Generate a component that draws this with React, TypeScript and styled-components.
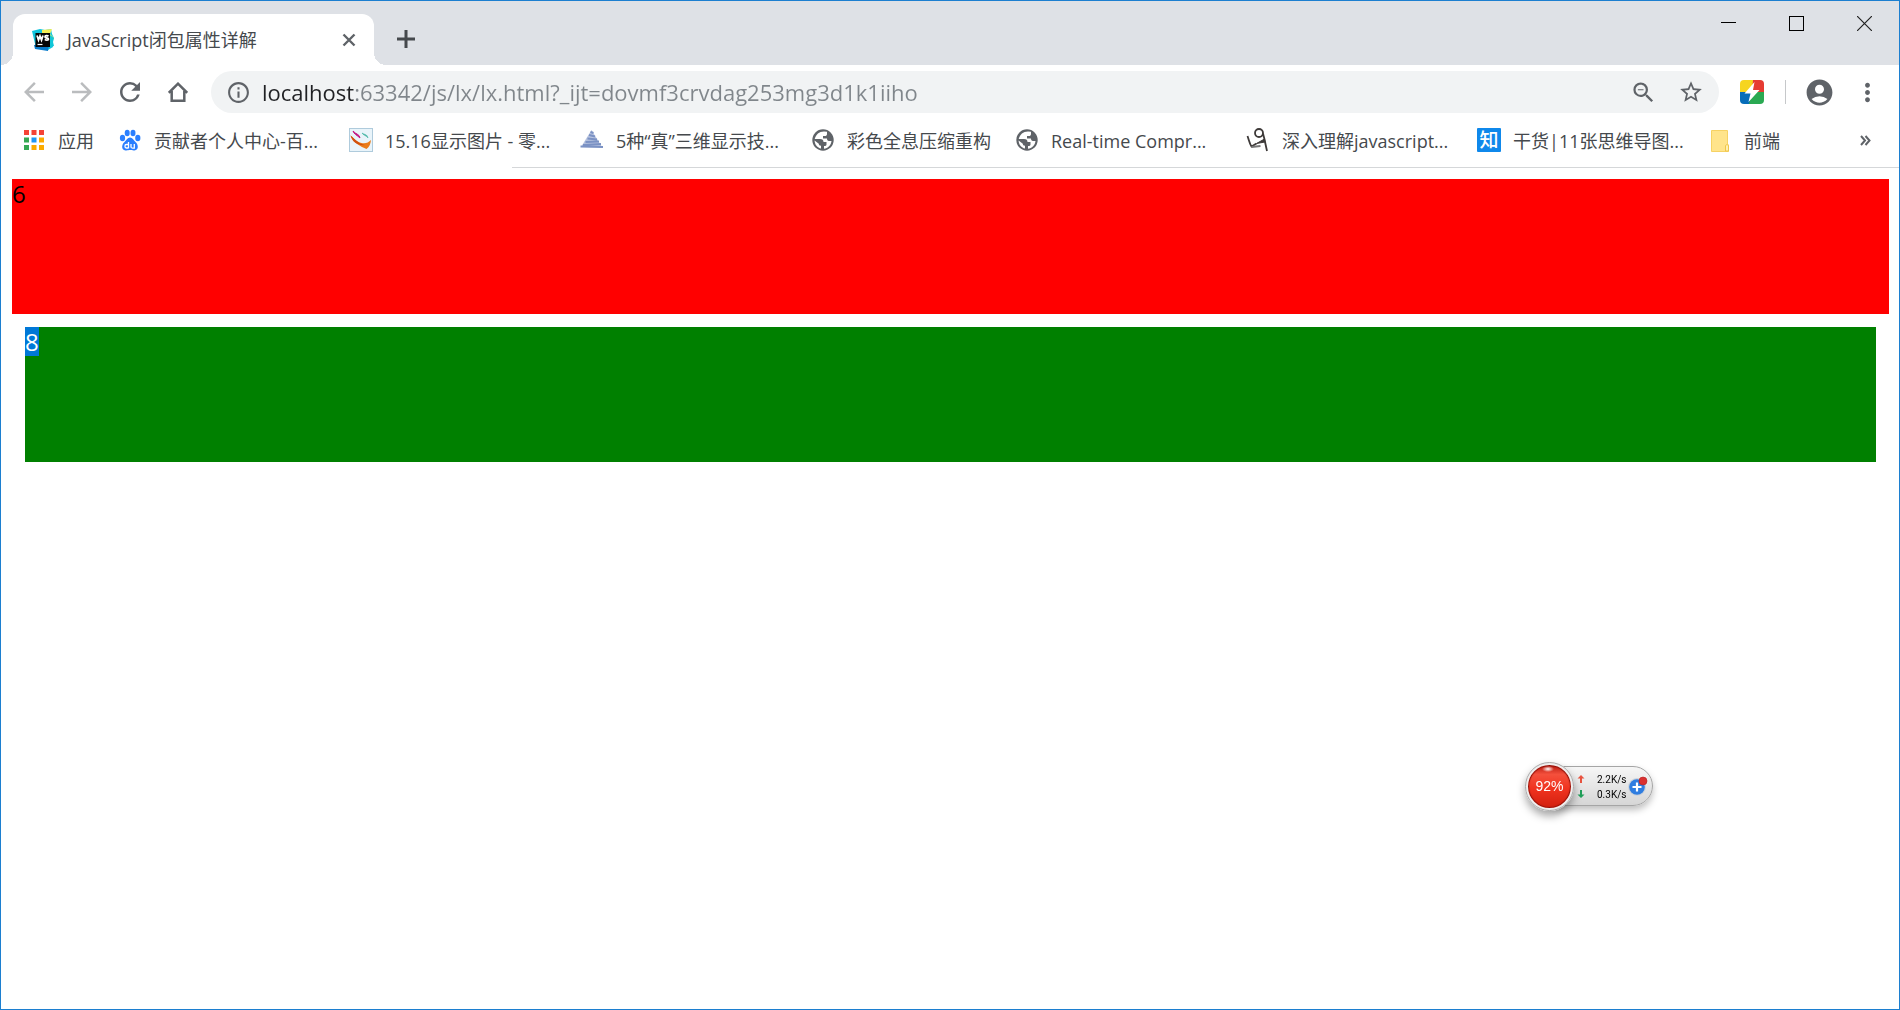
import React from 'react';
import styled, { createGlobalStyle } from 'styled-components';
import {
  MdArrowBack,
  MdArrowForward,
  MdRefresh,
  MdInfoOutline,
  MdZoomOut,
  MdStarBorder,
  MdAccountCircle,
  MdMoreVert,
} from 'react-icons/md';

const uiFont = '"Open Sans", "Noto Sans CJK SC", sans-serif';

const GlobalStyle = createGlobalStyle`
  *, *::before, *::after { box-sizing: border-box; }
  body { margin: 0; background: #fff; font-family: ${uiFont}; }
  button, input { font: inherit; margin: 0; padding: 0; border: 0; background: none; }
  svg { display: block; flex: none; }
`;

const Window = styled.div`
  display: flex;
  flex-direction: column;
  min-height: 100vh;
  border: 1px solid #1c7fd0;
  background: #fff;
`;

const TitleBar = styled.header`
  display: flex;
  align-items: flex-end;
  height: 64px;
  padding-left: 12px;
  background: #dee1e6;
`;

const Tab = styled.div`
  position: relative;
  display: flex;
  align-items: center;
  width: 361px;
  height: 51px;
  padding: 0 13px 0 18px;
  border-radius: 12px 12px 0 0;
  background: #fff;

  &::before,
  &::after {
    content: '';
    position: absolute;
    bottom: 0;
    width: 12px;
    height: 12px;
  }
  &::before {
    right: 100%;
    background: radial-gradient(circle at 0 0, transparent 12px, #fff 12px);
  }
  &::after {
    left: 100%;
    background: radial-gradient(circle at 100% 0, transparent 12px, #fff 12px);
  }
`;

const TabTitle = styled.span`
  flex: 1;
  margin-left: 12px;
  color: #45494d;
  font-size: 18px;
  line-height: 24px;
  white-space: nowrap;
`;

const IconButton = styled.button<{ $w: number; $h: number; $dim?: boolean }>`
  display: flex;
  flex: none;
  align-items: center;
  justify-content: center;
  width: ${(p) => p.$w}px;
  height: ${(p) => p.$h}px;
  color: ${(p) => (p.$dim ? '#babcbe' : '#5f6368')};
`;

const NewTab = styled(IconButton)`
  align-self: flex-end;
  margin: 0 0 5px 12px;
`;

const WindowControls = styled.div`
  display: flex;
  align-self: flex-start;
  margin-left: auto;
`;

const Toolbar = styled.nav`
  display: flex;
  align-items: center;
  height: 48px;
  padding: 6px 8px 0 9px;
`;

const AddressBar = styled.form`
  display: flex;
  flex: 1;
  align-items: center;
  height: 42px;
  margin: 0 9px;
  padding: 0 4px 0 3px;
  border-radius: 21px;
  background: #f1f3f4;
`;

const AddressInput = styled.input`
  flex: 1;
  min-width: 0;
  height: 32px;
  outline: none;
  color: transparent;
  background: linear-gradient(to right, #202124 93px, #80868b 93px);
  background-clip: text;
  -webkit-background-clip: text;
  font-size: 22px;
`;

const Separator = styled.span`
  width: 1px;
  height: 24px;
  margin: 0 9px;
  background: #c6c8ca;
`;

const Bookmarks = styled.nav`
  display: flex;
  align-items: center;
  gap: 24px;
  height: 54px;
  padding: 0 10px 0 21px;
`;

const BookmarkLink = styled.a<{ $full?: boolean }>`
  display: flex;
  flex: none;
  align-items: center;
  gap: 12px;
  width: ${(p) => (p.$full ? '207px' : 'auto')};
  color: #45494d;
  font-size: 18px;
  line-height: 24px;
  text-decoration: none;
  white-space: nowrap;
`;

const BookmarkLabel = styled.span`
  padding-top: 2px;
`;

const More = styled(IconButton)`
  margin-left: auto;
`;

const ToolbarEdge = styled.div`
  height: 1px;
  margin-left: 511px;
  background: #d5d7d9;
`;

const Page = styled.main`
  flex: 1;
  padding: 11px 10px 11px 11px;
  font-size: 24px;
  line-height: 29px;
`;

const Block = styled.div<{ $color: string; $inset?: boolean }>`
  height: 135px;
  margin: ${(p) => (p.$inset ? '13px' : '0')};
  background: ${(p) => p.$color};
  color: #000;
`;

const Selected = styled.mark`
  display: inline-block;
  background: #0078d7;
  color: #fff;
`;

const SpeedWidget = styled.aside`
  position: fixed;
  right: 247px;
  bottom: 199px;
  display: flex;
  align-items: center;
  height: 50px;
`;

const Ball = styled.div`
  z-index: 1;
  display: flex;
  align-items: center;
  justify-content: center;
  width: 49px;
  height: 49px;
  margin-right: -20px;
  border: 3px solid #eee;
  border-radius: 50%;
  outline: 1px solid #a9a9a9;
  outline-offset: -1px;
  background:
    radial-gradient(ellipse 6px 3px at 20px 4px, #fff, transparent),
    linear-gradient(#b81a10, #f4503c 22%, #f0331f 55%, #d2200f);
  box-shadow: inset 0 0 1px 1px #8e1109, 0 5px 8px rgba(0, 0, 0, 0.35);
  color: #fff;
  font: 14px "Liberation Sans", sans-serif;
`;

const Pill = styled.div`
  display: flex;
  align-items: center;
  width: 99px;
  height: 40px;
  padding-left: 22px;
  border: 1px solid #a5a5a5;
  border-radius: 0 20px 20px 0;
  background: linear-gradient(#f6f6f6, #d6d6d6);
  box-shadow: 0 4px 7px rgba(0, 0, 0, 0.25);
`;

const Rates = styled.div`
  display: grid;
  grid-template-columns: 8px 28px;
  align-items: center;
  column-gap: 12px;
  padding-top: 1px;
  color: #000;
  font: 10px/15px Roboto, sans-serif;
  white-space: nowrap;
`;

const Plus = styled.button`
  margin-left: 3px;
`;

const WebStormIcon = () => (
  <svg width="24" height="24" viewBox="0 0 24 24">
    <path d="M1 3l8-2 5 1 6-1 1 5 2 4-2 3 1 6-5 3-12-2z" fill="#10c5dd" />
    <path d="M11 2l10-1-2 5 4 4-2 4-10-6z" fill="#f4ef57" />
    <path d="M19 7l4 3-1 4 1 4-5 1z" fill="#12c6d8" />
    <path d="M3 17l15-1-1 7-13-2z" fill="#087bcc" />
    <rect x="4.500" y="5" width="14.500" height="14" fill="#050505" />
    <path d="M6 7.500l1.500 4.500 1.500-4L10.500 12 12 7.500M17.500 8.300c-1-.8-3.500-.9-3.500.6 0 1.600 3.600.6 3.500 2.200-.1 1.300-2.600 1.200-3.700.2" fill="none" stroke="#fff" strokeWidth="1.800" />
    <path d="M6.500 16.500h5" stroke="#fff" strokeWidth="1.200" />
  </svg>
);

const AppsIcon = () => {
  const colors = ['#f44336', '#f44336', '#f44336', '#34a853', '#2196f3', '#fbab00', '#34a853', '#fbab00', '#fbab00'];
  return (
    <svg width="24" height="24" viewBox="0 0 24 24">
      {colors.map((fill, i) => (
        <rect key={i} x={2 + (i % 3) * 7.5} y={2 + Math.floor(i / 3) * 7.5} width="5" height="5" fill={fill} />
      ))}
    </svg>
  );
};

const PawIcon = () => (
  <svg width="24" height="24" viewBox="0 0 24 24" fill="#2a7fff">
    <ellipse cx="4.500" cy="10" rx="2.600" ry="3.300" />
    <ellipse cx="9.200" cy="5" rx="2.500" ry="3.300" />
    <ellipse cx="15" cy="5" rx="2.500" ry="3.300" />
    <ellipse cx="19.800" cy="10" rx="2.600" ry="3.300" />
    <path d="M12 9.500c2.500 0 3.500 2.500 5.500 4.500 3 2.500 3.500 8-1 8.500-2 .2-3-.4-4.500-.4s-2.500.6-4.500.4c-4.500-.5-4-6-1-8.500 2-2 3-4.500 5.500-4.500z" />
    <path d="M10.500 14v6.300M10.500 16.500H8.300c-1.800 0-1.800 3.500 0 3.500h2.200M13 16v2.800c0 1.300.6 1.400 3.300 1.400V16" fill="none" stroke="#fff" strokeWidth="1.300" />
  </svg>
);

const SwooshIcon = () => (
  <svg width="24" height="24" viewBox="0 0 24 24">
    <rect x=".5" y=".5" width="23" height="23" fill="#e9f4fa" stroke="#afcbdc" />
    <path d="M1.500 7.500c4 3.500 6 6 11 7.500 4 1 7-.5 9.500-3-.5 4-1.500 7-4.500 9C12 19 3.500 14 1.500 7.500z" fill="#ea7d1b" />
    <path d="M1.500 7.500C6 11 9 15.500 16 17c-6 1-12.500-2-14.500-9.500z" fill="#d2510f" />
    <path d="M4 3c1 3 3 3.500 7 7-.5-4-4-3.500-7-7z" fill="#c31682" stroke="#c31682" />
    <path d="M13 5c2 3 4 2 6 5-1-4-3-3-6-5z" fill="#45b5a5" stroke="#45b5a5" strokeWidth=".6" />
  </svg>
);

const PyramidIcon = () => (
  <svg width="24" height="24" viewBox="0 0 24 24" stroke="#7b92c4" strokeWidth="2" fill="none">
    <path d="M10.500 4l3 1M9 7l6 1.500M7.500 10.500l9.500 1M5.500 14l13.500-.5M3 17l18-1M.5 18.500l22.500.5" />
    <path d="M11.500 2l10.500 17H1z" fill="#7b92c4" fillOpacity=".55" stroke="none" />
  </svg>
);

const StickFigureIcon = () => (
  <svg width="24" height="24" viewBox="0 0 24 24" fill="none" stroke="#3e3a39" strokeWidth="1.800">
    <circle cx="13" cy="5" r="4" />
    <path d="M17 5.500c1.500 5 2.500 11 4 17.500" />
    <path d="M18.500 11l-8 4.500 8.500-1.500z" fill="#3e3a39" strokeWidth="1" />
    <path d="M1.500 8c1.500 4 2 7.500 4 10.500l5-3" />
    <path d="M5.500 19l9-1" stroke="#777" />
  </svg>
);

const ZhiIcon = styled.span`
  display: flex;
  align-items: center;
  justify-content: center;
  width: 24px;
  height: 24px;
  border-radius: 1px;
  background: #0f88eb;
  color: #fff;
  font-size: 19px;
  font-weight: 500;
`;

const FolderIcon = () => (
  <svg width="24" height="24" viewBox="0 0 24 24">
    <path d="M3.500 2.500h16V16l1 1v6.500h-17z" fill="#ffe48b" stroke="#f6d264" />
    <path d="M17.500 23v-5.500l1.500-1 1.500 1V23z" fill="#fff0b3" stroke="#f0c648" />
  </svg>
);

const GlobeIcon = () => (
  <svg width="24" height="24" viewBox="0 0 24 24">
    <circle cx="12" cy="12" r="10.700" fill="#5f6368" />
    <path
      d="M13 3.500c-5 0-8 3-9.300 7.500H9c2.500 0 3.500 1 3.500 3h3v2.500c0 1-1 1.500-2.500 1.500v2.700c4-.3 7-3.500 7.500-7.700h-2.500c-1.500 0-2-1-2-2.500h-4V8h2c1 0 2-.6 2-2V3.800z"
      fill="#fff"
    />
    <path d="M3.600 12.500c0 4 3 7.500 6.400 8v-2.700c-1.500 0-2.200-.8-2.200-2z" fill="#fff" />
  </svg>
);

const ExtensionIcon = () => (
  <svg width="24" height="24" viewBox="0 0 24 24">
    <path d="M4 0h10v12H0V4a4 4 0 0 1 4-4z" fill="#f6d51f" />
    <path d="M13 0h7a4 4 0 0 1 4 4v8H12z" fill="#e63b32" />
    <path d="M0 12h13l-3 12H4a4 4 0 0 1-4-4z" fill="#066db9" />
    <path d="M12 12h12v8a4 4 0 0 1-4 4H9z" fill="#2aa952" />
    <path d="M14.500 2L4.500 13.500h6L8.500 22l11-12h-6.500z" fill="#fff" />
  </svg>
);

const bookmarks: { label: string; Icon: React.ElementType; full?: boolean; glyph?: string }[] = [
  { label: '应用', Icon: AppsIcon },
  { label: '贡献者个人中心-百...', Icon: PawIcon, full: true },
  { label: '15.16显示图片 - 零...', Icon: SwooshIcon, full: true },
  { label: '5种“真”三维显示技...', Icon: PyramidIcon, full: true },
  { label: '彩色全息压缩重构', Icon: GlobeIcon },
  { label: 'Real-time Compr...', Icon: GlobeIcon, full: true },
  { label: '深入理解javascript...', Icon: StickFigureIcon, full: true },
  { label: '干货|11张思维导图...', Icon: ZhiIcon, full: true, glyph: '知' },
  { label: '前端', Icon: FolderIcon },
];

const Arrow = ({ up }: { up?: boolean }) => (
  <svg width="8" height="8" viewBox="0 0 8 8">
    <path
      d={up ? 'M4 0l3.500 3.500H5V8H3V3.500H.5z' : 'M4 8l3.500-3.500H5V0H3v4.500H.5z'}
      fill={up ? '#e8533f' : '#22a05a'}
    />
  </svg>
);

export default function App() {
  return (
    <>
      <GlobalStyle />
      <Window>
        <TitleBar>
          <Tab>
            <WebStormIcon />
            <TabTitle>JavaScript闭包属性详解</TabTitle>
            <IconButton $w={24} $h={24} aria-label="关闭标签页">
              <svg width="14" height="14" viewBox="0 0 14 14" stroke="currentColor" strokeWidth="2.400">
                <path d="M1.500 1.500l11 11M12.500 1.500l-11 11" />
              </svg>
            </IconButton>
          </Tab>
          <NewTab $w={40} $h={42} aria-label="打开新的标签页">
            <svg width="18" height="18" viewBox="0 0 18 18" stroke="#45494d" strokeWidth="3">
              <path d="M9 0v18M0 9h18" />
            </svg>
          </NewTab>
          <WindowControls>
            <IconButton $w={68} $h={45} aria-label="最小化">
              <svg width="15" height="15" viewBox="0 0 15 15">
                <path d="M0 6.500h15" stroke="#000" />
              </svg>
            </IconButton>
            <IconButton $w={68} $h={45} aria-label="最大化">
              <svg width="15" height="15" viewBox="0 0 15 15">
                <rect x=".5" y=".5" width="14" height="14" fill="none" stroke="#000" />
              </svg>
            </IconButton>
            <IconButton $w={69} $h={45} aria-label="关闭">
              <svg width="15" height="15" viewBox="0 0 15 15">
                <path d="M0 0l15 15M15 0L0 15" stroke="#222" strokeWidth="1.200" />
              </svg>
            </IconButton>
          </WindowControls>
        </TitleBar>

        <Toolbar>
          <IconButton $w={48} $h={42} $dim aria-label="后退">
            <MdArrowBack size={30} />
          </IconButton>
          <IconButton $w={48} $h={42} $dim aria-label="前进">
            <MdArrowForward size={30} />
          </IconButton>
          <IconButton $w={48} $h={42} aria-label="重新加载">
            <MdRefresh size={30} />
          </IconButton>
          <IconButton $w={48} $h={42} aria-label="主页">
            <svg width="20" height="20" viewBox="0 0 20 20" fill="none" stroke="currentColor" strokeWidth="2.500">
              <path d="M.8 10.800L10 1.700l9.200 9.100M3.700 9v9.700h12.600V9" />
            </svg>
          </IconButton>
          <AddressBar>
            <IconButton type="button" $w={48} $h={42} aria-label="查看网站信息">
              <MdInfoOutline size={25} />
            </IconButton>
            <AddressInput
              aria-label="地址栏"
              defaultValue="localhost:63342/js/lx/lx.html?_ijt=dovmf3crvdag253mg3d1k1iiho"
              spellCheck={false}
            />
            <IconButton type="button" $w={48} $h={42} aria-label="缩放">
              <MdZoomOut size={27} />
            </IconButton>
            <IconButton type="button" $w={48} $h={42} aria-label="添加书签">
              <MdStarBorder size={26} />
            </IconButton>
          </AddressBar>
          <IconButton $w={48} $h={42} aria-label="扩展程序">
            <ExtensionIcon />
          </IconButton>
          <Separator />
          <IconButton $w={48} $h={42} aria-label="用户">
            <MdAccountCircle size={31} />
          </IconButton>
          <IconButton $w={48} $h={42} aria-label="菜单">
            <MdMoreVert size={29} />
          </IconButton>
        </Toolbar>

        <Bookmarks>
          {bookmarks.map(({ label, Icon, full, glyph }) => (
            <BookmarkLink key={label} href="#" $full={full}>
              <Icon>{glyph}</Icon>
              <BookmarkLabel>{label}</BookmarkLabel>
            </BookmarkLink>
          ))}
          <More $w={48} $h={42} aria-label="更多书签">
            <svg width="11" height="11" viewBox="0 0 11 11" fill="none" stroke="currentColor" strokeWidth="2">
              <path d="M1 1l4 4.500L1 10M5.500 1l4 4.500-4 4.500" />
            </svg>
          </More>
        </Bookmarks>
        <ToolbarEdge />

        <Page>
          <Block $color="#ff0000">6</Block>
          <Block $color="#008000" $inset>
            <Selected>8</Selected>
          </Block>
        </Page>
      </Window>

      <SpeedWidget>
        <Ball>92%</Ball>
        <Pill>
          <Rates>
            <Arrow up />
            <span>2.2K/s</span>
            <Arrow />
            <span>0.3K/s</span>
          </Rates>
          <Plus aria-label="加速">
            <svg width="20" height="20" viewBox="0 0 20 20">
              <circle cx="9" cy="11" r="9" fill="#cdd3da" />
              <circle cx="9" cy="11" r="7.800" fill="#2f7de0" />
              <path d="M9 6.500v9M4.500 11h9" stroke="#fff" strokeWidth="2.200" />
              <circle cx="15" cy="5" r="4" fill="#d93030" stroke="#b52222" strokeWidth=".6" />
            </svg>
          </Plus>
        </Pill>
      </SpeedWidget>
    </>
  );
}
